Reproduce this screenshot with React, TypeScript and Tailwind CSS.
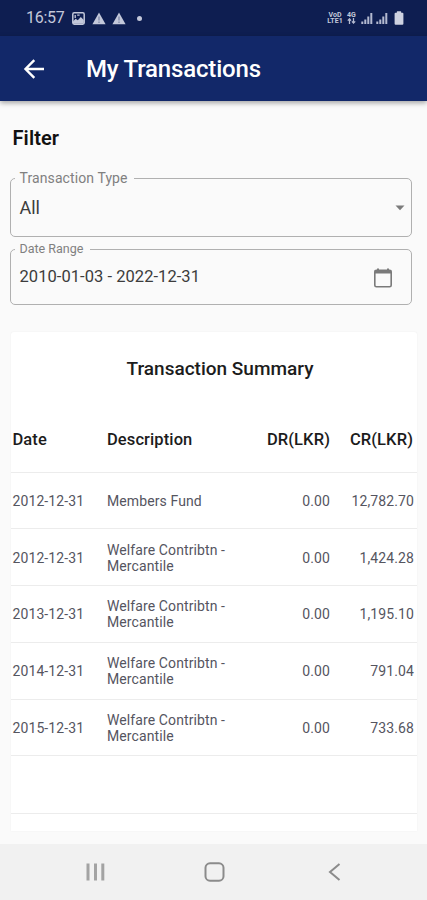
import type { ReactNode } from 'react'

type Transaction = {
  date: string
  description: string[]
  dr: string
  cr: string
}

const transactions: Transaction[] = [
  { date: '2012-12-31', description: ['Members Fund'], dr: '0.00', cr: '12,782.70' },
  { date: '2012-12-31', description: ['Welfare Contribtn -', 'Mercantile'], dr: '0.00', cr: '1,424.28' },
  { date: '2013-12-31', description: ['Welfare Contribtn -', 'Mercantile'], dr: '0.00', cr: '1,195.10' },
  { date: '2014-12-31', description: ['Welfare Contribtn -', 'Mercantile'], dr: '0.00', cr: '791.04' },
  { date: '2015-12-31', description: ['Welfare Contribtn -', 'Mercantile'], dr: '0.00', cr: '733.68' },
]

function WarningIcon() {
  return (
    <svg width="14" height="13" viewBox="0 0 14 13">
      <path d="M7 0.5 13.6 12.3H0.4Z" fill="#c3c8da" />
      <path d="M7 4.5v4M7 9.6v1.3" stroke="#7f88a8" strokeWidth="1.3" />
    </svg>
  )
}

function SignalIcon() {
  return (
    <svg width="12" height="12" viewBox="0 0 12 12" fill="#b4bad0">
      <rect x="0.3" y="9.5" width="2" height="2.5" />
      <rect x="3.3" y="7.5" width="2" height="4.5" />
      <rect x="6.3" y="4.5" width="2" height="7.5" />
      <rect x="9.3" y="1" width="2" height="11" />
    </svg>
  )
}

function StatusBar() {
  return (
    <div className="flex h-9 items-center bg-[#0e1e51] pl-[26px] pr-[22px] text-[#c3c8da]">
      <span className="w-[46px] text-[16px] leading-none tracking-[-0.3px]">16:57</span>
      <svg width="13" height="13" viewBox="0 0 13 13">
        <rect x="0.8" y="0.8" width="11.4" height="11.4" rx="1.4" fill="none" stroke="#c3c8da" strokeWidth="1.5" />
        <path d="M1 11.8V9.4l2.6-2.6 2.2 1.4L8.8 5l3 3v3.8Z" fill="#c3c8da" />
        <path d="M3.2 3v3M5.2 3.2h2.4" stroke="#c3c8da" strokeWidth="1.3" />
      </svg>
      <span className="ml-[7px]"><WarningIcon /></span>
      <span className="ml-[6px]"><WarningIcon /></span>
      <span className="ml-[11px] size-[5px] rounded-full bg-[#c3c8da]" />

      <div className="ml-auto flex items-center">
        <div className="flex w-[16px] flex-col items-center text-[7px] font-bold leading-[6.5px]">
          <span>VoD</span>
          <span>LTE1</span>
        </div>
        <div className="ml-[4px] flex w-[9px] flex-col items-center">
          <span className="text-[7px] font-bold leading-[6.5px]">4G</span>
          <svg width="9" height="6" viewBox="0 0 9 6" fill="none" stroke="#b4bad0" strokeWidth="1.3">
            <path d="M2.5 6V1M0.8 2.6 2.5 0.8 4 2.6M6.5 0v5M4.9 3.4 6.5 5.1 8.2 3.4" />
          </svg>
        </div>
        <span className="ml-[5px]"><SignalIcon /></span>
        <span className="ml-[3px]"><SignalIcon /></span>
        <svg className="ml-[6px] mr-[1px]" width="10" height="14" viewBox="0 0 10 14" fill="#ced2e1">
          <rect x="2.8" y="0.3" width="4.4" height="3" rx="0.6" />
          <rect x="0.6" y="1.7" width="8.8" height="12" rx="1" />
        </svg>
      </div>
    </div>
  )
}

function AppBar() {
  return (
    <header className="relative flex h-[65px] items-center bg-[#122869] pl-[23px] pt-[1px] shadow-[0_2px_5px_rgba(0,0,0,0.35)]">
      <svg width="23" height="22" viewBox="0 0 23 22" fill="none" stroke="#fff" strokeWidth="2.4">
        <path d="M21 11H3M11.3 2.2 2.5 11l8.8 8.8" />
      </svg>
      <h1 className="ml-[40px] text-[24px] font-medium leading-none tracking-[-0.18px] text-white">My Transactions</h1>
    </header>
  )
}

function OutlinedField({ label, className, legendClass, children }: {
  label: string
  className: string
  legendClass: string
  children: ReactNode
}) {
  return (
    <fieldset className={`rounded-[5px] border border-[#b0b0b0] ${className}`}>
      <legend className={`ml-[4px] pl-[4.5px] leading-4 text-[#808080] ${legendClass}`}>{label}</legend>
      {children}
    </fieldset>
  )
}

export default function App() {
  return (
    <div className="flex h-[900px] w-[427px] flex-col overflow-hidden bg-[#fafafa] font-['Roboto',sans-serif]">
      <StatusBar />
      <AppBar />

      <main className="flex flex-1 flex-col pl-[10px] pr-[10px]">
        <h2 className="ml-[2.5px] mt-[26px] text-[20px] font-semibold leading-[22px] tracking-[0.1px] text-[#111]">Filter</h2>

        <OutlinedField label="Transaction Type" className="mt-[21px] h-[67px] w-[402px]" legendClass="w-[119px] text-[14px] tracking-[0.1px]">
          <div className="flex items-center pl-[8.5px] pr-[6px] pt-[12px]">
            <span className="text-[18px] leading-5 text-[#3c3c3c]">All</span>
            <svg className="ml-auto" width="10" height="6" viewBox="0 0 10 6">
              <path d="M0.5 0.5h9L5 5.2Z" fill="#7b7b7b" />
            </svg>
          </div>
        </OutlinedField>

        <OutlinedField label="Date Range" className="mt-[4px] h-[64px] w-[402px]" legendClass="w-[75px] text-[12.5px]">
          <div className="flex items-center pl-[8.5px] pr-[18px] pt-[8px]">
            <span className="text-[16.5px] leading-6 tracking-[0.05px] text-[#3c3c3c]">2010-01-03 - 2022-12-31</span>
            <svg className="ml-auto mt-[1px]" width="20" height="20" viewBox="0 0 20 20">
              <rect x="1.8" y="2.2" width="16.4" height="16.6" rx="1.6" fill="none" stroke="#7a7a7a" strokeWidth="1.6" />
              <path d="M1.8 2.2h16.4v3.4H1.8ZM4 0.6h2v2H4ZM14 0.6h2v2h-2Z" fill="#7a7a7a" />
            </svg>
          </div>
        </OutlinedField>

        <section className="ml-[1px] mt-[27px] h-[499px] w-[406px] overflow-hidden rounded-t-[3px] bg-white shadow-[0_0_2px_rgba(0,0,0,0.06)]">
          <h3 className="pl-[12px] pt-[26px] text-center text-[19px] font-medium leading-[22px] text-[#1c1c1c]">
            Transaction Summary
          </h3>
          <table className="mt-[27px] w-full table-fixed border-collapse">
            <colgroup>
              <col className="w-[96px]" />
              <col className="w-[144px]" />
              <col className="w-[79px]" />
              <col className="w-[87px]" />
            </colgroup>
            <thead>
              <tr className="h-[65px] border-b border-[#ececec] text-[16.5px] tracking-[0.1px] text-[#1c1c1c]">
                <th className="p-0 pl-[1.5px] pt-[2px] text-left font-medium">Date</th>
                <th className="p-0 pt-[2px] text-left font-medium">Description</th>
                <th className="p-0 pt-[2px] text-right font-medium">DR(LKR)</th>
                <th className="p-0 pr-[4px] pt-[2px] text-right font-medium">CR(LKR)</th>
              </tr>
            </thead>
            <tbody>
              {transactions.map((t, i) => (
                <tr key={i} className="h-[56.8px] border-b border-[#ececec] text-[14px] leading-4 tracking-[0.1px] text-[#55555f]">
                  <td className="p-0 pl-[1.5px] pt-[1px]">{t.date}</td>
                  <td className="p-0 pt-[1px]">
                    {t.description.map((line) => (
                      <div key={line}>{line}</div>
                    ))}
                  </td>
                  <td className="p-0 pt-[1px] text-right">{t.dr}</td>
                  <td className="p-0 pr-[3px] pt-[1px] text-right">{t.cr}</td>
                </tr>
              ))}
              <tr className="h-[58px] border-b border-[#ececec]">
                <td colSpan={4} />
              </tr>
            </tbody>
          </table>
        </section>
      </main>

      <nav className="flex h-14 items-center bg-[#f1f1f1] pl-[86px]">
        <svg width="19" height="18" viewBox="0 0 19 18" fill="#a3a3a3">
          <rect x="0.5" y="0.5" width="3" height="17" />
          <rect x="8" y="0.5" width="3" height="17" />
          <rect x="15.3" y="0.5" width="3" height="17" />
        </svg>
        <svg className="ml-[99px]" width="21" height="20" viewBox="0 0 21 20">
          <rect x="1.5" y="1.3" width="18" height="17.4" rx="4.5" fill="none" stroke="#8b8b8b" strokeWidth="2" />
        </svg>
        <svg className="ml-[103px]" width="13" height="18" viewBox="0 0 13 18">
          <path d="M11.5 1 2 9l9.5 8" fill="none" stroke="#8b8b8b" strokeWidth="2" />
        </svg>
      </nav>
    </div>
  )
}
